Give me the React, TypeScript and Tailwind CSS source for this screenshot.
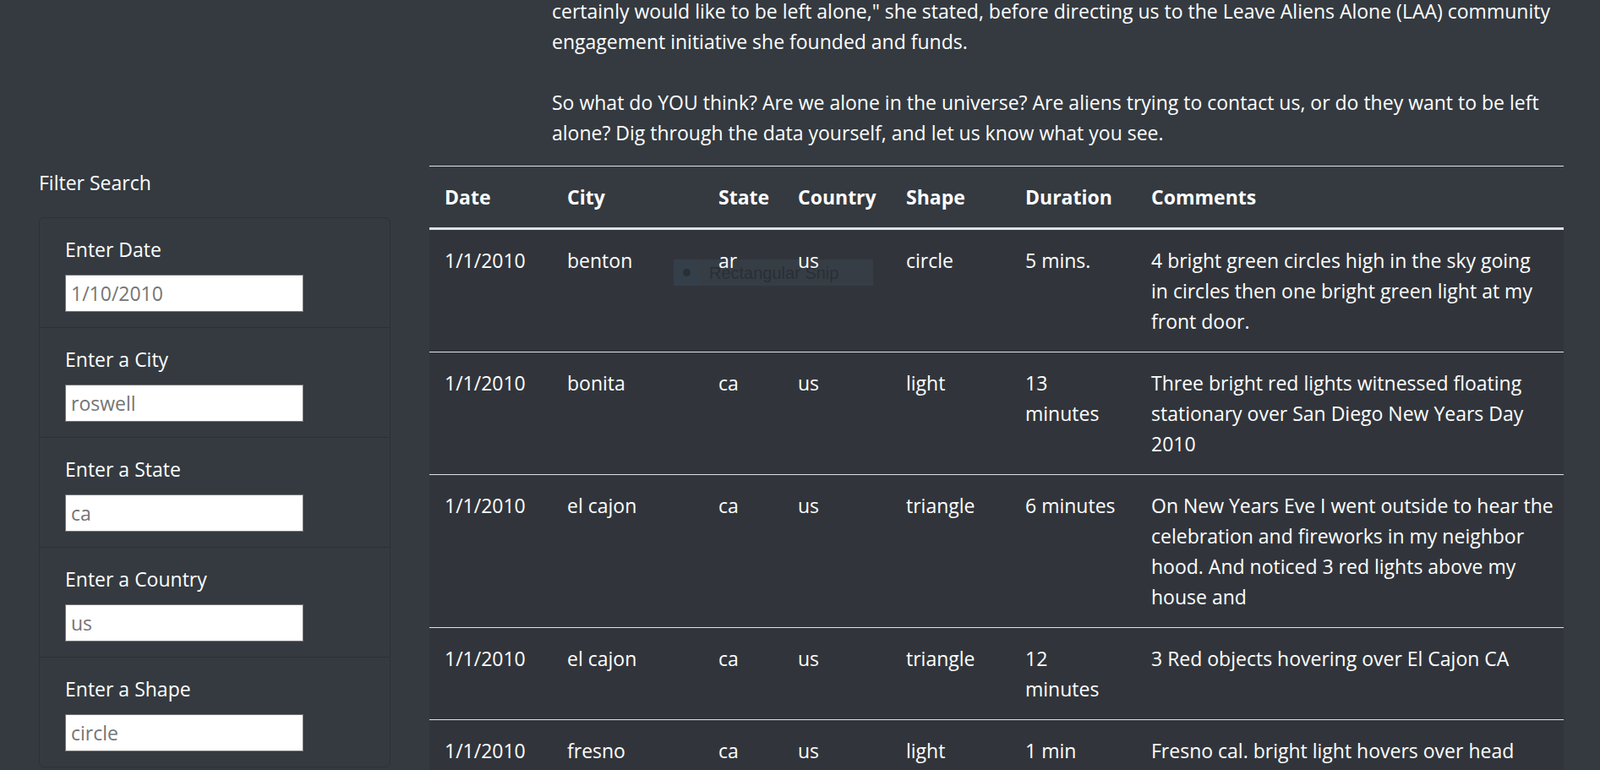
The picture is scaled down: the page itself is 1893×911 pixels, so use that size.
const FONT = "font-['Open_Sans',sans-serif]";

const PARAGRAPH = [
  [
    "certainly would like to be left alone,\" she stated, before directing us to the Leave Aliens Alone (LAA) community",
    "engagement initiative she founded and funds.",
  ],
  [
    "So what do YOU think? Are we alone in the universe? Are aliens trying to contact us, or do they want to be left",
    "alone? Dig through the data yourself, and let us know what you see.",
  ],
];

const FILTERS = [
  { label: "Enter Date", placeholder: "1/10/2010" },
  { label: "Enter a City", placeholder: "roswell" },
  { label: "Enter a State", placeholder: "ca" },
  { label: "Enter a Country", placeholder: "us" },
  { label: "Enter a Shape", placeholder: "circle" },
];

const COLUMNS = ["Date", "City", "State", "Country", "Shape", "Duration", "Comments"];

const SIGHTINGS = [
  {
    date: "1/1/2010", city: "benton", state: "ar", country: "us", shape: "circle",
    duration: ["5 mins."],
    comments: ["4 bright green circles high in the sky going", "in circles then one bright green light at my", "front door."],
  },
  {
    date: "1/1/2010", city: "bonita", state: "ca", country: "us", shape: "light",
    duration: ["13", "minutes"],
    comments: ["Three bright red lights witnessed floating", "stationary over San Diego New Years Day", "2010"],
  },
  {
    date: "1/1/2010", city: "el cajon", state: "ca", country: "us", shape: "triangle",
    duration: ["6 minutes"],
    comments: ["On New Years Eve I went outside to hear the", "celebration and fireworks in my neighbor", "hood. And noticed 3 red lights above my", "house and"],
  },
  {
    date: "1/1/2010", city: "el cajon", state: "ca", country: "us", shape: "triangle",
    duration: ["12", "minutes"],
    comments: ["3 Red objects hovering over El Cajon CA"],
  },
  {
    date: "1/1/2010", city: "fresno", state: "ca", country: "us", shape: "light",
    duration: ["1 min"],
    comments: ["Fresno cal. bright light hovers over head", "then moves away quickly."],
  },
];

export default function App() {
  return (
    <div className={`min-h-screen bg-[#343a40] text-white ${FONT} text-[23px] leading-[36px]`}>
      {/* intro copy, scrolled partly out of view */}
      <div className="-mt-[5px] pl-[653px] pr-[50px]">
        {PARAGRAPH.map((para, i) => (
          <p key={i} className={i === 0 ? "mb-[36px]" : ""}>
            {para.map((line) => (
              <span key={line} className="block whitespace-nowrap">{line}</span>
            ))}
          </p>
        ))}
      </div>

      <div className="mt-[21px] flex">
        {/* filter sidebar */}
        <aside className="w-[508px] shrink-0 pl-[46px] pr-[46px] pt-[2px]">
          <h5 className="mb-[23px]">Filter Search</h5>
          <ul className="rounded-[6px] border border-[#2c3136]">
            {FILTERS.map((f, i) => (
              <li key={f.label} className={`px-[30px] pt-[19px] pb-[18px] ${i > 0 ? "border-t border-[#2c3136]" : ""}`}>
                <label className="mb-[12px] block">{f.label}</label>
                <input
                  type="text"
                  placeholder={f.placeholder}
                  className={`block h-[44px] w-[282px] border border-[#767676] bg-white px-[6px] text-[23px] text-black placeholder:text-[#757575] ${FONT}`}
                />
              </li>
            ))}
          </ul>
        </aside>

        {/* sightings table */}
        <div className="relative w-[1342px]">
          {/* screen-capture tooltip floating over the table */}
          <div className="pointer-events-none absolute left-[289px] top-[111px] z-[1] flex h-[31px] w-[236px] items-center bg-[#3a434c]/60">
            <div className="flex h-full w-[31px] items-center justify-center bg-[#34404d]/70">
              <span className="h-[9px] w-[9px] rounded-full bg-[#2a2f36]" />
            </div>
            <span className="ml-[11px] text-[20px] leading-none text-[#2a2f35] font-['Liberation_Sans',sans-serif]">Rectangular Snip</span>
          </div>
          <table className="w-full table-fixed border-collapse">
            <colgroup>
              <col className="w-[145px]" />
              <col className="w-[179px]" />
              <col className="w-[94px]" />
              <col className="w-[128px]" />
              <col className="w-[141px]" />
              <col className="w-[149px]" />
              <col className="w-[506px]" />
            </colgroup>
            <thead>
              <tr className="border-t border-b-[3px] border-t-[#dee2e6] border-b-[#dee2e6]">
                {COLUMNS.map((c) => (
                  <th key={c} className="px-[18px] py-[18px] text-left align-top font-bold">{c}</th>
                ))}
              </tr>
            </thead>
            <tbody className="bg-[#31353b]">
              {SIGHTINGS.map((s, i) => (
                <tr key={i} className="border-b border-[#dee2e6]">
                  {[s.date, s.city, s.state, s.country, s.shape].map((v, j) => (
                    <td key={j} className="relative z-[2] px-[18px] py-[18px] align-top whitespace-nowrap">{v}</td>
                  ))}
                  <td className="relative z-[2] px-[18px] py-[18px] align-top">
                    {s.duration.map((l) => <span key={l} className="block whitespace-nowrap">{l}</span>)}
                  </td>
                  <td className="relative z-[2] px-[18px] py-[18px] align-top">
                    {s.comments.map((l) => <span key={l} className="block whitespace-nowrap">{l}</span>)}
                  </td>
                </tr>
              ))}
            </tbody>
          </table>
        </div>
      </div>
    </div>
  );
}
